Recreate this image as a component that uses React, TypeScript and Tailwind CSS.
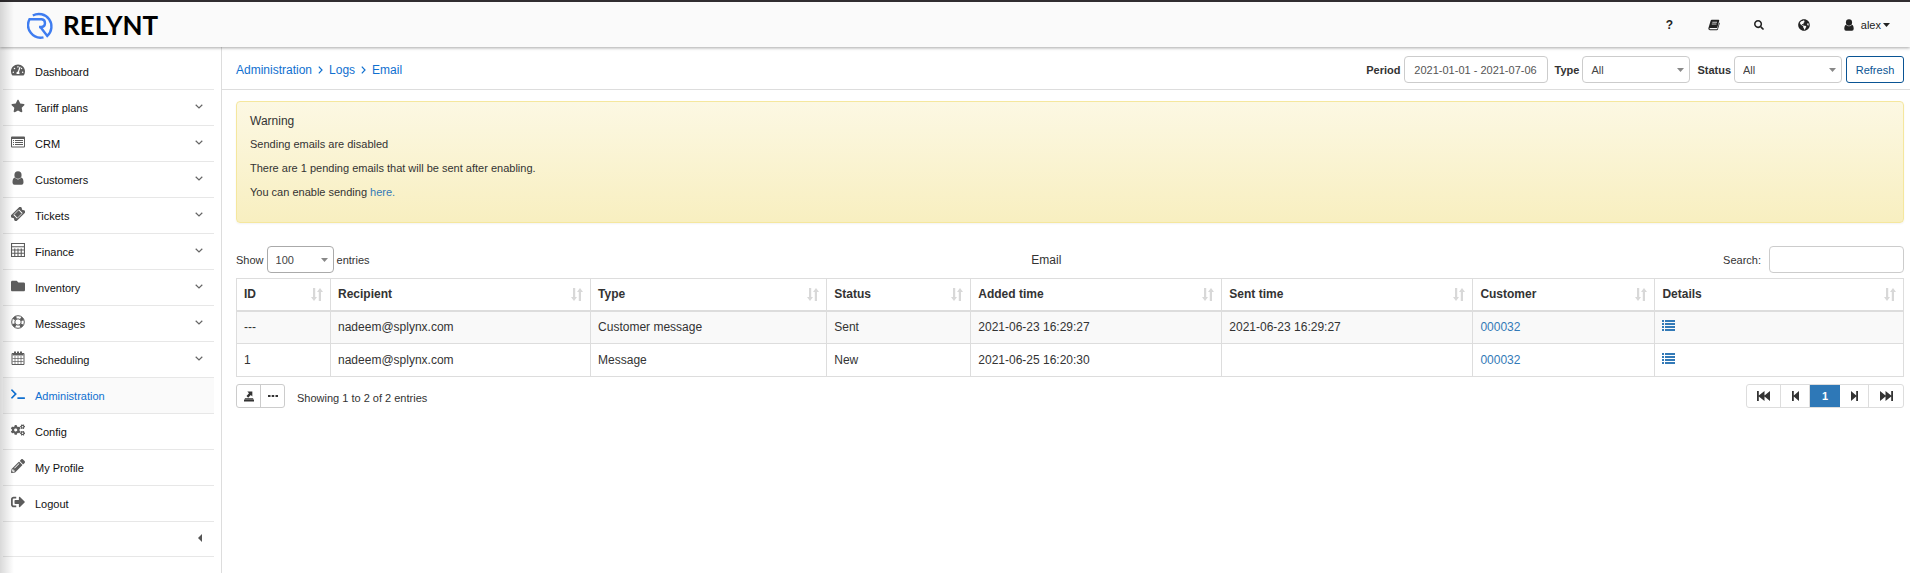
import React from "react";
import {
  FaCogs,
  FaFolder,
  FaGlobeAmericas,
  FaPencilAlt,
  FaSearch,
  FaSignOutAlt,
  FaStar,
  FaTachometerAlt,
  FaTerminal,
} from "react-icons/fa";

type IconProps = { className?: string };

const UserIcon = ({ className }: IconProps) => (
  <svg viewBox="0 0 14 14" className={className} fill="currentColor" aria-hidden="true">
    <ellipse cx="7" cy="4" rx="3.600" ry="3.800" />
    <path d="M3.600 6.600C2 7.200 1.500 9 1.500 11.500q0 2.300 2 2.300h7q2 0 2-2.300c0-2.500-.5-4.300-2.100-4.900Q9 8.400 7 8.400T3.600 6.600z" />
  </svg>
);

const ListAltIcon = ({ className }: IconProps) => (
  <svg viewBox="0 0 14 12" className={className} aria-hidden="true">
    <path
      fill="currentColor"
      fillRule="evenodd"
      d="M0 1.500Q0 .5 1 .5h12q1 0 1 1v9q0 1-1 1H1q-1 0-1-1zM1 3v7.500h12V3z"
    />
    <path fill="currentColor" d="M2 4h1v1H2zm2 0h8v1H4zM2 6h1v1H2zm2 0h8v1H4zM2 8h1v1H2zm2 0h8v1H4z" />
  </svg>
);

const TicketIcon = ({ className }: IconProps) => (
  <svg viewBox="0 0 14 14" className={className} aria-hidden="true">
    <g transform="rotate(-45 7 7)">
      <path
        fill="currentColor"
        fillRule="evenodd"
        d="M0 3h14v2.600a1.500 1.500 0 0 0 0 2.800V11H0V8.400a1.500 1.500 0 0 0 0-2.800zM3 4.500v5h1v-5zM10 4.500v5h1v-5z"
      />
      <path stroke="#fff" strokeWidth=".7" d="M4 4.500h6M4 9.500h6" />
    </g>
  </svg>
);

const TableIcon = ({ className }: IconProps) => (
  <svg viewBox="0 0 13 13" className={className} fill="none" stroke="currentColor" aria-hidden="true">
    <path d="M.5.5h12v12H.5zM.5 3.500h12" />
    <path d="M1 6.500h11M1 9.500h11M3.500 5v7.500M6.500 5v7.500M9.500 5v7.500" />
  </svg>
);

const RingIcon = ({ className }: IconProps) => (
  <svg viewBox="0 0 14 14" className={className} fill="none" stroke="currentColor" aria-hidden="true">
    <circle cx="7" cy="7" r="6.300" />
    <circle cx="7" cy="7" r="3.200" />
    <circle cx="7" cy="7" r="4.800" strokeWidth="3" strokeDasharray="3.200 4.340" strokeDashoffset="-2.170" />
  </svg>
);

const CalendarIcon = ({ className }: IconProps) => (
  <svg viewBox="0 0 13 14" className={className} fill="none" stroke="currentColor" aria-hidden="true">
    <path d="M.5 2.500h12v11H.5z" />
    <path strokeWidth="2" d="M1 3.500h11" />
    <path strokeWidth="2" d="M3.500.5v3M9.500.5v3M6.500 .5v2" />
    <path strokeWidth=".7" d="M1 7.500h11M1 10.500h11M3.500 5v8M6.500 5v8M9.500 5v8" />
  </svg>
);

const BookIcon = ({ className }: IconProps) => (
  <svg viewBox="0 0 14 14" className={className} aria-hidden="true">
    <path
      fill="currentColor"
      d="M4.500 1h7.800q1 0 .8 1L11 9.600q-.3 1-1.300 1H2.600q-1 0-.9.700.1.600.9.600h7.500q.7 0 .9-.7l2.100-7q.7.500.5 1.300l-2 6.600q-.3 1-1.300 1H2.300Q.6 13.100.4 11.500q0-.7.300-1.500L3 2.200Q3.300 1 4.500 1z"
    />
    <path stroke="#fafafa" strokeWidth=".9" d="M5 3.800h5.500M4.400 5.900h5.500" />
  </svg>
);

const ListIcon = ({ className }: IconProps) => (
  <svg viewBox="0 0 13 11" className={className} fill="currentColor" aria-hidden="true">
    <path d="M0 0h2v2H0zM3 0h10v2H3zM0 3h2v2H0zM3 3h10v2H3zM0 6h2v2H0zM3 6h10v2H3zM0 9h2v2H0zM3 9h10v2H3z" />
  </svg>
);

const ExportIcon = ({ className }: IconProps) => (
  <svg viewBox="0 0 12 12" className={className} fill="currentColor" aria-hidden="true">
    <path d="M4 0h6v6L8.200 4.200 5 7.500 3 5.500l3-3.300zM1 8h10v1.300H1zM0 9.500h12V12H0z" />
  </svg>
);

const SortIcon = ({ className }: IconProps) => (
  <svg viewBox="0 0 12 13" className={className} fill="currentColor" aria-hidden="true">
    <path d="M2 0h2.200v9H6L3 13 0 9h2zM7.800 13H10V4h2L9 0 6 4h1.800z" />
  </svg>
);

const ChevronDown = ({ className }: IconProps) => (
  <svg viewBox="0 0 8 5" className={className} fill="none" stroke="currentColor" strokeWidth="1.200" aria-hidden="true">
    <path d="M.7.7 4 3.900 7.300.7" />
  </svg>
);

const ChevronRight = ({ className }: IconProps) => (
  <svg viewBox="0 0 5 8" className={className} fill="none" stroke="currentColor" strokeWidth="1.200" aria-hidden="true">
    <path d="M.8.7 4 4 .8 7.300" />
  </svg>
);

const StepIcon = ({ className }: IconProps) => (
  <svg viewBox="0 0 7 10" className={className} fill="currentColor" aria-hidden="true">
    <path d="M0 0l5.200 4.600V0H7v10H5.200V5.400L0 10z" />
  </svg>
);

const SkipIcon = ({ className }: IconProps) => (
  <svg viewBox="0 0 13 10" className={className} fill="currentColor" aria-hidden="true">
    <path d="M0 0l5.500 4.600V0L11.200 4.600V0H13v10h-1.800V5.400L5.500 10V5.400L0 10z" />
  </svg>
);

const Logo = () => (
  <a href="#home" className="flex items-center gap-2 text-black">
    <svg viewBox="0 0 28 28" className="size-7" fill="none" stroke="#3f7df0" strokeWidth="2.400" aria-hidden="true">
      <path d="M5.800 4.500A12.600 12.600 0 0 1 20.300 24.900L13.200 15.800" />
      <path d="M16.500 26.300A12.600 12.600 0 0 1 2.500 8.300H14.700a3.900 3.900 0 0 1 0 7.700H12" />
    </svg>
    <span className="font-[Lato,sans-serif] text-[26px] leading-none font-bold">RELYNT</span>
  </a>
);

const menu = [
  { label: "Dashboard", Icon: FaTachometerAlt },
  { label: "Tariff plans", Icon: FaStar, open: true },
  { label: "CRM", Icon: ListAltIcon, open: true },
  { label: "Customers", Icon: UserIcon, open: true },
  { label: "Tickets", Icon: TicketIcon, open: true },
  { label: "Finance", Icon: TableIcon, open: true },
  { label: "Inventory", Icon: FaFolder, open: true },
  { label: "Messages", Icon: RingIcon, open: true },
  { label: "Scheduling", Icon: CalendarIcon, open: true },
  { label: "Administration", Icon: FaTerminal, active: true },
  { label: "Config", Icon: FaCogs },
  { label: "My Profile", Icon: FaPencilAlt },
  { label: "Logout", Icon: FaSignOutAlt },
];

const columns = [
  { name: "ID", width: "w-[5.64%]" },
  { name: "Recipient", width: "w-[15.6%]" },
  { name: "Type", width: "w-[14.17%]" },
  { name: "Status", width: "w-[8.64%]" },
  { name: "Added time", width: "w-[15.06%]" },
  { name: "Sent time", width: "w-[15.06%]" },
  { name: "Customer", width: "w-[10.92%]" },
  { name: "Details", width: "w-[14.91%]" },
];

const rows = [
  {
    id: "---",
    recipient: "nadeem@splynx.com",
    type: "Customer message",
    status: "Sent",
    added: "2021-06-23 16:29:27",
    sent: "2021-06-23 16:29:27",
    customer: "000032",
  },
  {
    id: "1",
    recipient: "nadeem@splynx.com",
    type: "Message",
    status: "New",
    added: "2021-06-25 16:20:30",
    sent: "",
    customer: "000032",
  },
];

function Select({ id, value, className }: { id: string; value: string; className: string }) {
  return (
    <span className="relative flex">
      <select
        id={id}
        className={`h-[27px] appearance-none rounded border bg-white pt-px pl-2 text-[#444] ${className}`}
        defaultValue={value}
      >
        <option>{value}</option>
      </select>
      <svg
        viewBox="0 0 7 4"
        className="pointer-events-none absolute top-3 right-1.5 h-1 w-[7px] text-[#888]"
        fill="currentColor"
        aria-hidden="true"
      >
        <path d="M0 0h7L3.500 4z" />
      </svg>
    </span>
  );
}

export default function App() {
  const cell = "border border-[#ddd] px-[7px]";
  const pageButton = "flex h-full items-center justify-center border-r border-[#ddd]";
  return (
    <div className="relative flex min-h-screen flex-col bg-white font-['Liberation_Sans',Arial,sans-serif] text-[11px] leading-[14px] text-[#333]">
      <header className="z-10 flex h-[47px] items-center justify-between border-t-2 border-[#302d30] bg-[#fafafa] pr-5 pl-[27px] shadow-[0_1px_3px_rgba(0,0,0,0.35)]">
        <Logo />
        <nav className="flex items-center text-[#222]">
          <a href="#help" className="flex w-[45px] justify-center text-xs font-bold" aria-label="Help">
            ?
          </a>
          <a href="#docs" className="flex w-[45px] justify-center" aria-label="Documentation">
            <BookIcon className="size-3" />
          </a>
          <a href="#find" className="flex w-[45px] justify-center" aria-label="Search">
            <FaSearch className="size-[10px]" />
          </a>
          <a href="#language" className="flex w-[45px] justify-center" aria-label="Language">
            <FaGlobeAmericas className="size-3" />
          </a>
          <button type="button" className="ml-4 flex items-center">
            <UserIcon className="mr-1.5 size-3" />
            alex
            <svg viewBox="0 0 7 4" className="ml-0.5 h-1 w-[7px]" fill="currentColor" aria-hidden="true">
              <path d="M0 0h7L3.500 4z" />
            </svg>
          </button>
        </nav>
      </header>

      <div className="flex flex-1">
        <aside className="w-[222px] shrink-0 border-r border-[#ddd] pt-[7px] pr-[7px] pl-[3px]">
          <ul>
            {menu.map(({ label, Icon, open, active }) => (
              <li key={label}>
                <a
                  href={`#${label}`}
                  className={`flex h-9 items-center border-b border-[#e7e7e7] pr-[11px] pl-2 ${
                    active ? "bg-[#fafafa] text-[#1070d0]" : "text-[#111]"
                  }`}
                >
                  <Icon className={`mr-[10px] mb-1 size-3.5 ${active ? "" : "text-[#5c5c5c]"}`} />
                  <span className="flex-1">{label}</span>
                  {open && <ChevronDown className="mb-0.5 h-[5px] w-2 text-[#666]" />}
                </a>
              </li>
            ))}
          </ul>
          <button
            type="button"
            aria-label="Collapse menu"
            className="flex h-[35px] w-full items-center justify-end border-b border-[#e7e7e7] pr-3 pb-0.5"
          >
            <svg viewBox="0 0 4 8" className="h-2 w-1" fill="#555" aria-hidden="true">
              <path d="M4 0v8L0 4z" />
            </svg>
          </button>
        </aside>

        <main className="min-w-0 flex-1">
          <div className="flex items-center justify-between border-b border-[#ddd] pt-[9px] pr-1.5 pb-1.5 pl-3.5">
            <nav className="flex items-center gap-1.5 text-xs text-[#1070d0]">
              <a href="#administration">Administration</a>
              <ChevronRight className="h-2 w-[5px]" />
              <a href="#logs">Logs</a>
              <ChevronRight className="h-2 w-[5px]" />
              <a href="#email">Email</a>
            </nav>
            <form className="flex items-center gap-[3px]">
              <label htmlFor="period" className="font-bold">
                Period
              </label>
              <input
                id="period"
                className="h-[27px] w-36 rounded border border-[#ccc] text-center text-[#555]"
                defaultValue="2021-01-01 - 2021-07-06"
              />
              <label htmlFor="type" className="ml-1 font-bold">
                Type
              </label>
              <Select id="type" value="All" className="w-[108px] border-[#ccc]" />
              <label htmlFor="status" className="ml-1 font-bold">
                Status
              </label>
              <Select id="status" value="All" className="w-[108px] border-[#ccc]" />
              <button
                type="button"
                className="ml-px h-[27px] w-[58px] rounded-[3px] border border-[#0a5494] bg-white text-[#0a5494]"
              >
                Refresh
              </button>
            </form>
          </div>

          <div className="flex flex-col pt-[11px] pr-1.5 pl-3.5">
            <section className="flex flex-col gap-2.5 rounded border border-[#f5e79e] bg-linear-to-b from-[#fcf8e3] to-[#f8efc0] px-[13px] pt-3 pb-[23px] shadow-[0_1px_2px_rgba(0,0,0,0.05)]">
              <h2 className="-mb-0.5 text-xs leading-[15px]">Warning</h2>
              <p>Sending emails are disabled</p>
              <p>There are 1 pending emails that will be sent after enabling.</p>
              <p>
                You can enable sending{" "}
                <a href="#enable" className="text-[#337ab7]">
                  here.
                </a>
              </p>
            </section>

            <div className="mt-[23px] flex items-center justify-between">
              <div className="flex items-center gap-[3px]">
                <label htmlFor="size">Show</label>
                <Select id="size" value="100" className="w-[67px] border-[#aaa]" />
                <span>entries</span>
              </div>
              <h1 className="text-xs">Email</h1>
              <div className="flex items-center gap-2">
                <label htmlFor="search">Search:</label>
                <input id="search" type="text" className="h-[27px] w-[135px] rounded border border-[#ccc] px-2" />
              </div>
            </div>

            <table className="mt-[5px] w-full table-fixed border-collapse text-left text-xs">
              <thead>
                <tr className="h-8">
                  {columns.map(({ name, width }) => (
                    <th key={name} className={`${cell} ${width} border-b-2`}>
                      <div className="flex items-center justify-between">
                        {name}
                        <SortIcon className="h-[13px] w-3 text-[#d8d8d8]" />
                      </div>
                    </th>
                  ))}
                </tr>
              </thead>
              <tbody>
                {rows.map((row) => (
                  <tr key={row.id} className="h-[33px] odd:bg-[#f9f9f9]">
                    <td className={cell}>{row.id}</td>
                    <td className={cell}>{row.recipient}</td>
                    <td className={cell}>{row.type}</td>
                    <td className={cell}>{row.status}</td>
                    <td className={cell}>{row.added}</td>
                    <td className={cell}>{row.sent}</td>
                    <td className={cell}>
                      <a href="#customer" className="text-[#337ab7]">
                        {row.customer}
                      </a>
                    </td>
                    <td className={cell}>
                      <a href="#details" aria-label="Details" className="inline-block text-[#337ab7]">
                        <ListIcon className="h-[11px] w-[13px]" />
                      </a>
                    </td>
                  </tr>
                ))}
              </tbody>
            </table>

            <div className="mt-[7px] flex items-center justify-between">
              <div className="flex items-center gap-3">
                <div className="flex h-6 items-center rounded-[3px] border border-[#ccc]">
                  <button
                    type="button"
                    aria-label="Export"
                    className="flex h-full w-6 items-center justify-center border-r border-[#ccc]"
                  >
                    <ExportIcon className="h-[11px] w-[10px]" />
                  </button>
                  <button type="button" aria-label="More" className="flex h-full w-[23px] items-center justify-center">
                    <svg viewBox="0 0 10 2" className="h-0.5 w-2.5" fill="currentColor" aria-hidden="true">
                      <path d="M0 0h2.500v2H0zM3.700 0h2.500v2H3.700zM7.500 0H10v2H7.500z" />
                    </svg>
                  </button>
                </div>
                <p className="pt-1">Showing 1 to 2 of 2 entries</p>
              </div>
              <nav className="flex h-6 items-center overflow-hidden rounded-[3px] border border-[#ddd]">
                <button type="button" aria-label="First page" className={`${pageButton} w-[34px]`}>
                  <SkipIcon className="h-[10px] w-[13px] rotate-180" />
                </button>
                <button type="button" aria-label="Previous page" className={`${pageButton} w-[29px]`}>
                  <StepIcon className="h-[10px] w-[7px] rotate-180" />
                </button>
                <button type="button" className="h-6 w-[30px] bg-[#2e78b7] font-bold text-white">
                  1
                </button>
                <button type="button" aria-label="Next page" className={`${pageButton} w-[29px]`}>
                  <StepIcon className="h-[10px] w-[7px]" />
                </button>
                <button type="button" aria-label="Last page" className="flex h-full w-[34px] items-center justify-center">
                  <SkipIcon className="h-[10px] w-[13px]" />
                </button>
              </nav>
            </div>
          </div>
        </main>
      </div>
      <div className="pointer-events-none absolute inset-y-0 left-0 z-20 w-3.5 bg-linear-to-r from-black/15 to-transparent" />
    </div>
  );
}
